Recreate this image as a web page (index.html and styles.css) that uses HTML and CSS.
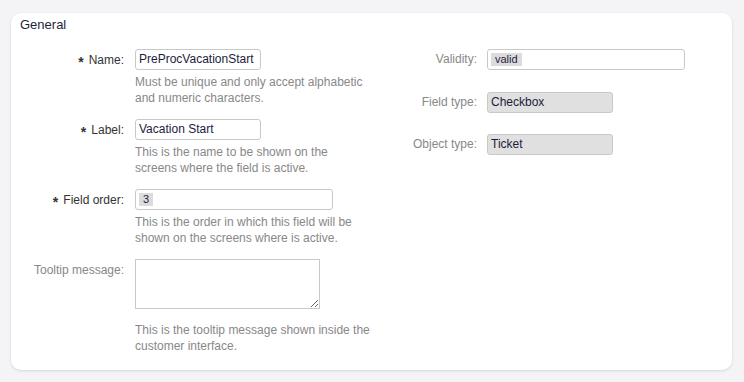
FILE: index.html
```
<!DOCTYPE html>
<html>
<head>
<meta charset="utf-8">
<link rel="stylesheet" href="styles.css">
</head>
<body>
<div class="card">
  <div class="card-title">General</div>
  <div class="columns">
    <div class="col col-left">
      <div class="row">
        <label class="lbl req"><span class="star">*</span>Name:</label>
        <div class="field">
          <div class="input w126">PreProcVacationStart</div>
          <div class="help">Must be unique and only accept alphabetic and numeric characters.</div>
        </div>
      </div>
      <div class="row">
        <label class="lbl req"><span class="star">*</span>Label:</label>
        <div class="field">
          <div class="input w126">Vacation Start</div>
          <div class="help">This is the name to be shown on the screens where the field is active.</div>
        </div>
      </div>
      <div class="row">
        <label class="lbl req"><span class="star">*</span>Field order:</label>
        <div class="field">
          <div class="input w198"><span class="tag">3</span></div>
          <div class="help">This is the order in which this field will be shown on the screens where is active.</div>
        </div>
      </div>
      <div class="row">
        <label class="lbl muted tall">Tooltip message:</label>
        <div class="field">
          <textarea class="textarea"></textarea>
          <div class="help help-ta">This is the tooltip message shown inside the customer interface.</div>
        </div>
      </div>
    </div>
    <div class="col col-right">
      <div class="rrow">
        <label class="lbl muted rl">Validity:</label>
        <div class="input w198"><span class="tag">valid</span></div>
      </div>
      <div class="rrow">
        <label class="lbl muted rl">Field type:</label>
        <div class="input w126 ro">Checkbox</div>
      </div>
      <div class="rrow">
        <label class="lbl muted rl">Object type:</label>
        <div class="input w126 ro">Ticket</div>
      </div>
    </div>
  </div>
</div>
</body>
</html>
```
FILE: styles.css
```
* { box-sizing: border-box; }
html, body { margin: 0; padding: 0; }
body {
  background: #f4f4f6;
  font-family: "Liberation Sans", Arial, sans-serif;
  font-size: 12px;
  color: #333;
  width: 744px;
  height: 382px;
  overflow: hidden;
}
.card {
  margin: 13px 12px 0 11px;
  height: 357px;
  background: #fff;
  border-radius: 10px;
  box-shadow: 0 1px 3px rgba(0,0,0,0.12);
  padding: 4px 9px 0 9px;
}
.card-title {
  font-size: 13px;
  color: #1f1f3a;
  line-height: 16px;
}
.columns {
  display: flex;
  margin-top: 16px;
}
.col-left { width: 352px; }
.col-right { flex: 1; }
.row {
  display: flex;
  align-items: flex-start;
  margin-bottom: 13px;
}
.lbl {
  width: 115px;
  flex: none;
  text-align: right;
  line-height: 21px;
  padding-right: 11px;
  color: #333;
  white-space: nowrap;
}
.lbl.muted { color: #888; }
.star {
  display: inline-block;
  font-size: 14px;
  font-weight: bold;
  margin-right: 5px;
  position: relative;
  top: 3px;
}
.lbl.tall { line-height: 22px; }
.field { width: 236px; }
.input {
  height: 21px;
  border: 1px solid #c8c8c8;
  border-radius: 3px;
  background: #fff;
  color: #1c1c3c;
  padding: 0 3px;
  line-height: 19px;
  font-size: 12px;
  display: flex;
  align-items: center;
  white-space: nowrap;
}
.w126 { width: 126px; }
.w198 { width: 198px; }
.input.ro { background: #e0e0e0; }
.tag {
  background: #dcdcdc;
  font-size: 11px;
  line-height: 13px;
  padding: 0 4px;
  color: #1c1c3c;
}
.help {
  color: #888;
  line-height: 16px;
  margin-top: 4px;
  width: 236px;
}
.textarea {
  display: block;
  width: 185px;
  height: 50px;
  border: 1px solid #c8c8c8;
  border-radius: 0;
  margin: 0;
  resize: both;
  font-family: inherit;
}
.help.help-ta { margin-top: 13px; }
.rrow {
  display: flex;
  align-items: center;
  margin-bottom: 21.5px;
}
.rrow .lbl.rl { width: 115px; padding-right: 10px; }
```
